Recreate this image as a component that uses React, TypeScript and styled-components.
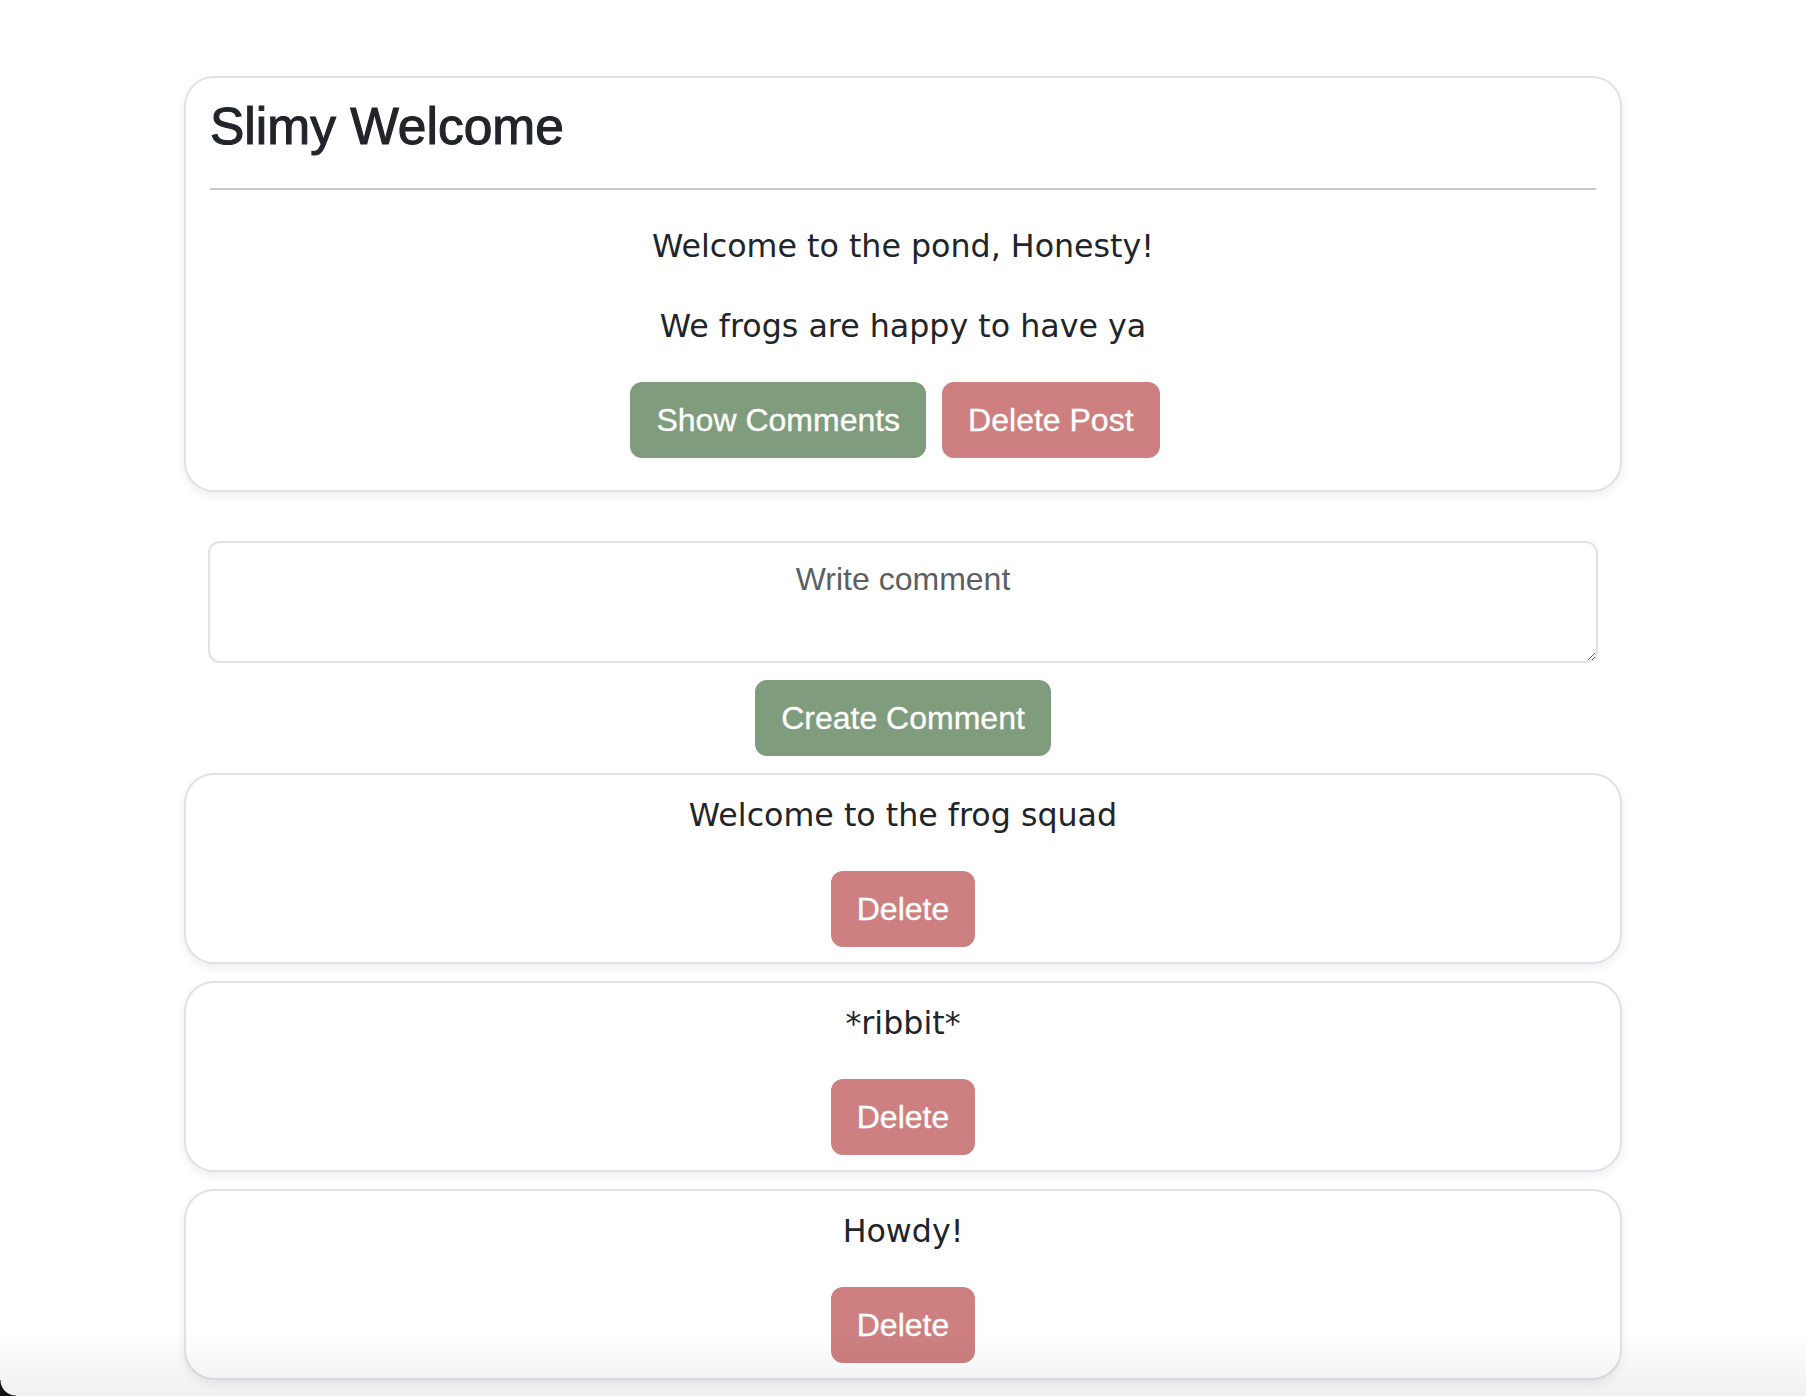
import React from "react";
import styled, { createGlobalStyle } from "styled-components";

const GlobalStyle = createGlobalStyle`
  html, body {
    margin: 0;
    padding: 0;
    background: #ffffff;
  }
  * {
    box-sizing: border-box;
  }
`;

const Page = styled.main`
  display: flex;
  flex-direction: column;
  align-items: center;
  padding-top: 76px;
  padding-bottom: 40px;
`;

const Card = styled.section<{ $top: number; $bottom: number }>`
  width: 1438px;
  background: #ffffff;
  border: 2px solid #dfe2e6;
  border-radius: 30px;
  box-shadow: 0 4px 10px rgba(0, 0, 0, 0.07);
  padding: ${(p) => p.$top}px 24px ${(p) => p.$bottom}px;
  text-align: center;
`;

const Title = styled.h1`
  margin: 0;
  text-align: left;
  font-family: "Liberation Sans", Arial, Helvetica, sans-serif;
  font-size: 51.5px;
  font-weight: 400;
  -webkit-text-stroke: 1.1px #212529;
  line-height: 1.2;
  color: #212529;
`;

const Divider = styled.hr`
  margin: 30px 0 32px;
  border: 0;
  border-top: 2px solid #c9cacb;
  opacity: 1;
`;

const Body = styled.p`
  margin: 0 0 32px;
  font-family: "DejaVu Sans", Verdana, sans-serif;
  font-size: 31.7px;
  line-height: 48px;
  color: #212529;
`;

const ButtonRow = styled.div`
  display: flex;
  justify-content: center;
`;

const Btn = styled.button<{ $tone: "green" | "red"; $trail?: boolean }>`
  font-family: "Liberation Sans", Arial, Helvetica, sans-serif;
  font-size: 32px;
  line-height: 48px;
  padding: 12px 24px;
  border: 2px solid ${(p) => (p.$tone === "green" ? "#7f9c7d" : "#ce8080")};
  background: ${(p) => (p.$tone === "green" ? "#7f9c7d" : "#ce8080")};
  color: #ffffff;
  -webkit-text-stroke: 0.3px #ffffff;
  border-radius: 12px;
  margin-right: ${(p) => (p.$trail ? "16px" : "0")};
  cursor: pointer;
`;

const CommentForm = styled.form`
  display: flex;
  flex-direction: column;
  align-items: center;
  gap: 17px;
  margin-top: 49px;
`;

const CommentInput = styled.textarea`
  display: block;
  width: 1390px;
  height: 122px;
  padding: 12px 24px;
  font-family: "Liberation Sans", Arial, Helvetica, sans-serif;
  font-size: 32px;
  line-height: 48px;
  color: #212529;
  text-align: center;
  border: 2px solid #dfe2e6;
  border-radius: 12px;
  background: #ffffff;
  outline: none;

  &::placeholder {
    color: #5b5f64;
    opacity: 1;
  }
`;

const CommentList = styled.div`
  display: flex;
  flex-direction: column;
  gap: 17px;
  margin-top: 17px;
`;

const WindowShade = styled.div`
  position: fixed;
  left: 0;
  right: 0;
  bottom: 0;
  height: 64px;
  pointer-events: none;
  background: linear-gradient(to bottom, rgba(0, 0, 0, 0), rgba(0, 0, 0, 0.06));
`;

const WindowCorner = styled.div`
  position: fixed;
  left: 0;
  bottom: 0;
  width: 16px;
  height: 16px;
  pointer-events: none;
  background: radial-gradient(circle at 100% 0, transparent 15px, #111512 16px);
`;

const comments = ["Welcome to the frog squad", "*ribbit*", "Howdy!"];

export default function App() {
  return (
    <>
      <GlobalStyle />
      <Page>
        <Card $top={18} $bottom={32}>
          <Title>Slimy Welcome</Title>
          <Divider />
          <Body>Welcome to the pond, Honesty!</Body>
          <Body>We frogs are happy to have ya</Body>
          <ButtonRow>
            <Btn type="button" $tone="green" $trail>
              Show Comments
            </Btn>
            <Btn type="button" $tone="red" $trail>
              Delete Post
            </Btn>
          </ButtonRow>
        </Card>

        <CommentForm onSubmit={(e) => e.preventDefault()}>
          <CommentInput placeholder="Write comment" rows={2} />
          <Btn type="submit" $tone="green">
            Create Comment
          </Btn>
        </CommentForm>

        <CommentList>
          {comments.map((c) => (
            <Card key={c} $top={16} $bottom={15}>
              <Body>{c}</Body>
              <ButtonRow>
                <Btn type="button" $tone="red">
                  Delete
                </Btn>
              </ButtonRow>
            </Card>
          ))}
        </CommentList>
      </Page>
      <WindowShade />
      <WindowCorner />
    </>
  );
}
